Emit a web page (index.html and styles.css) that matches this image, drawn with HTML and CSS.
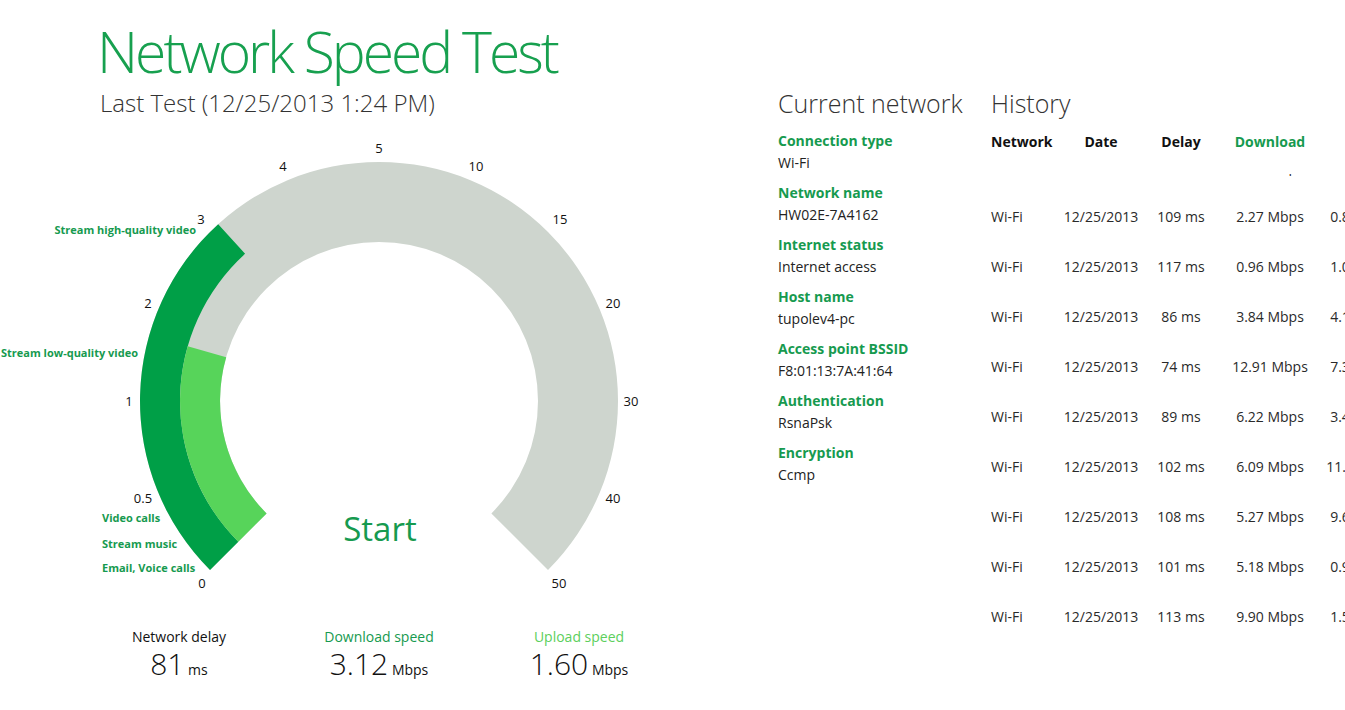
FILE: index.html
```html
<!DOCTYPE html>
<html lang="en">
  <head>
    <meta charset="UTF-8" />
    <meta name="viewport" content="width=device-width, initial-scale=1.0" />
    <title>Network Speed Test</title>

    <link rel="stylesheet" href="styles.css">
  </head>
  <body>
    <div class="app">
      <section class="test">
        <header class="test-head">
          <h1>Network Speed Test</h1>
          <p class="last-test">Last Test (12/25/2013 1:24 PM)</p>
        </header>

        <!-- speed dial, drawn in page coordinates (centre 379,401) -->
        <svg class="gauge" width="660" height="470" viewBox="0 130 660 470">
          <path class="ring" d="M210,570 A239,239 0 1 1 548,570 L491.4,513.4 A159,159 0 1 0 266.6,513.4 Z" />
          <path class="down" d="M210,570 A239,239 0 0 1 218.2,224.2 L245.1,253.8 A199,199 0 0 0 238.3,541.7 Z" />
          <path class="up" d="M238.3,541.7 A199,199 0 0 1 187.7,346.2 L226.2,357.2 A159,159 0 0 0 266.6,513.4 Z" />

          <g class="ticks">
            <text x="202" y="583">0</text>
            <text x="143" y="498">0.5</text>
            <text x="129" y="401">1</text>
            <text x="148" y="303">2</text>
            <text x="201" y="219">3</text>
            <text x="283" y="166">4</text>
            <text x="379" y="148">5</text>
            <text x="476" y="166">10</text>
            <text x="560" y="219">15</text>
            <text x="613" y="303">20</text>
            <text x="631" y="401">30</text>
            <text x="613" y="498">40</text>
            <text x="559" y="583">50</text>
          </g>

          <g class="uses">
            <text class="end" x="196" y="229">Stream high-quality video</text>
            <text class="end" x="138" y="352">Stream low-quality video</text>
            <text x="102" y="517">Video calls</text>
            <text x="102" y="543">Stream music</text>
            <text x="102" y="567">Email, Voice calls</text>
          </g>

          <text class="start" x="380" y="528">Start</text>
        </svg>

        <div class="results">
          <div class="stat">
            <p class="stat-label">Network delay</p>
            <p class="stat-value"><span class="num">81</span> ms</p>
          </div>
          <div class="stat">
            <p class="stat-label download">Download speed</p>
            <p class="stat-value"><span class="num">3.12</span> Mbps</p>
          </div>
          <div class="stat">
            <p class="stat-label upload">Upload speed</p>
            <p class="stat-value"><span class="num">1.60</span> Mbps</p>
          </div>
        </div>
      </section>

      <section class="network">
        <h2>Current network</h2>
        <dl class="props">
          <dt>Connection type</dt>
          <dd>Wi-Fi</dd>
          <dt>Network name</dt>
          <dd>HW02E-7A4162</dd>
          <dt>Internet status</dt>
          <dd>Internet access</dd>
          <dt>Host name</dt>
          <dd>tupolev4-pc</dd>
          <dt>Access point BSSID</dt>
          <dd>F8:01:13:7A:41:64</dd>
          <dt>Authentication</dt>
          <dd>RsnaPsk</dd>
          <dt>Encryption</dt>
          <dd>Ccmp</dd>
        </dl>
      </section>

      <section class="history">
        <h2>History</h2>
        <div class="row head">
          <span>Network</span>
          <span>Date</span>
          <span>Delay</span>
          <span class="download">Download</span>
        </div>
        <div class="list">
          <div class="rows">
            <div class="row"><span>Wi-Fi</span><span>12/25/2013</span><span>95 ms</span><span>4.41 Mbps</span><span>1.12 Mbps</span></div>
            <div class="row"><span>Wi-Fi</span><span>12/25/2013</span><span>109 ms</span><span>2.27 Mbps</span><span>0.85 Mbps</span></div>
            <div class="row"><span>Wi-Fi</span><span>12/25/2013</span><span>117 ms</span><span>0.96 Mbps</span><span>1.02 Mbps</span></div>
            <div class="row"><span>Wi-Fi</span><span>12/25/2013</span><span>86 ms</span><span>3.84 Mbps</span><span>4.17 Mbps</span></div>
            <div class="row"><span>Wi-Fi</span><span>12/25/2013</span><span>74 ms</span><span>12.91 Mbps</span><span>7.30 Mbps</span></div>
            <div class="row"><span>Wi-Fi</span><span>12/25/2013</span><span>89 ms</span><span>6.22 Mbps</span><span>3.48 Mbps</span></div>
            <div class="row"><span>Wi-Fi</span><span>12/25/2013</span><span>102 ms</span><span>6.09 Mbps</span><span>11.20 Mbps</span></div>
            <div class="row"><span>Wi-Fi</span><span>12/25/2013</span><span>108 ms</span><span>5.27 Mbps</span><span>9.64 Mbps</span></div>
            <div class="row"><span>Wi-Fi</span><span>12/25/2013</span><span>101 ms</span><span>5.18 Mbps</span><span>0.97 Mbps</span></div>
            <div class="row"><span>Wi-Fi</span><span>12/25/2013</span><span>113 ms</span><span>9.90 Mbps</span><span>1.55 Mbps</span></div>
          </div>
        </div>
      </section>
    </div>
  </body>
</html>
```

FILE: styles.css
```css
* {
  margin: 0;
  padding: 0;
  box-sizing: border-box;
}

body {
  background-color: #fff;
  color: #222;
  font-family: "Open Sans", "Noto Sans", sans-serif;
  overflow: hidden;
}

.app {
  display: flex;
  height: 710px;
}

/* left column: title, dial, results */
.test {
  width: 778px;
  flex-shrink: 0;
}

.test-head {
  height: 130px;
  padding-left: 97px;
  padding-top: 14px;
}

.test-head h1 {
  font-size: 57px;
  font-weight: 300;
  line-height: 74px;
  color: #17a04f;
  letter-spacing: -3px;
}

.test-head .last-test {
  font-size: 24px;
  font-weight: 300;
  line-height: 30px;
  color: #333;
  padding-left: 3px;
}

.gauge {
  display: block;
}

.gauge .ring {
  fill: #ced5ce;
}

.gauge .down {
  fill: #009f47;
}

.gauge .up {
  fill: #57d45a;
}

.gauge text {
  dominant-baseline: central;
}

.ticks text {
  font-size: 13px;
  fill: #111;
  text-anchor: middle;
}

.uses text {
  font-size: 11px;
  font-weight: 700;
  fill: #169a4f;
}

.uses .end {
  text-anchor: end;
}

.gauge .start {
  font-size: 33px;
  fill: #169a4f;
  text-anchor: middle;
}

.results {
  display: flex;
  padding-left: 79px;
  padding-top: 27px;
}

.stat {
  width: 200px;
  text-align: center;
}

.stat-label {
  font-size: 14px;
  line-height: 20px;
  color: #111;
}

.stat-label.download {
  color: #169a4f;
}

.stat-label.upload {
  color: #5ccf5c;
}

.stat-value {
  font-size: 14px;
  color: #111;
  line-height: 34px;
}

.stat-value .num {
  font-size: 30px;
  font-weight: 300;
}

/* middle column: properties of the current connection */
.network {
  width: 213px;
  flex-shrink: 0;
}

h2 {
  font-size: 25px;
  font-weight: 300;
  color: #333;
  line-height: 30px;
  margin-top: 88px;
  margin-bottom: 12px;
}

.props dt {
  font-size: 14px;
  font-weight: 700;
  color: #169a4f;
  line-height: 22px;
}

.props dd {
  font-size: 14px;
  color: #222;
  line-height: 22px;
  margin-bottom: 8px;
}

/* right column: scrolled list of previous runs */
.history {
  flex: 1;
  overflow: hidden;
}

.row {
  display: grid;
  grid-template-columns: 65px 90px 70px 108px 80px;
  align-items: center;
  height: 50px;
  font-size: 14px;
  color: #2a2a2a;
  white-space: nowrap;
}

.row span {
  text-align: center;
}

.row span:first-child {
  text-align: left;
}

.row.head {
  height: 22px;
  font-weight: 700;
  color: #111;
  margin-bottom: 22px;
}

.row.head .download {
  color: #169a4f;
}

.list {
  height: 470px;
  overflow: hidden;
}

/* list is scrolled a little, so the top row peeks out under the header */
.rows {
  margin-top: -33px;
}
```
